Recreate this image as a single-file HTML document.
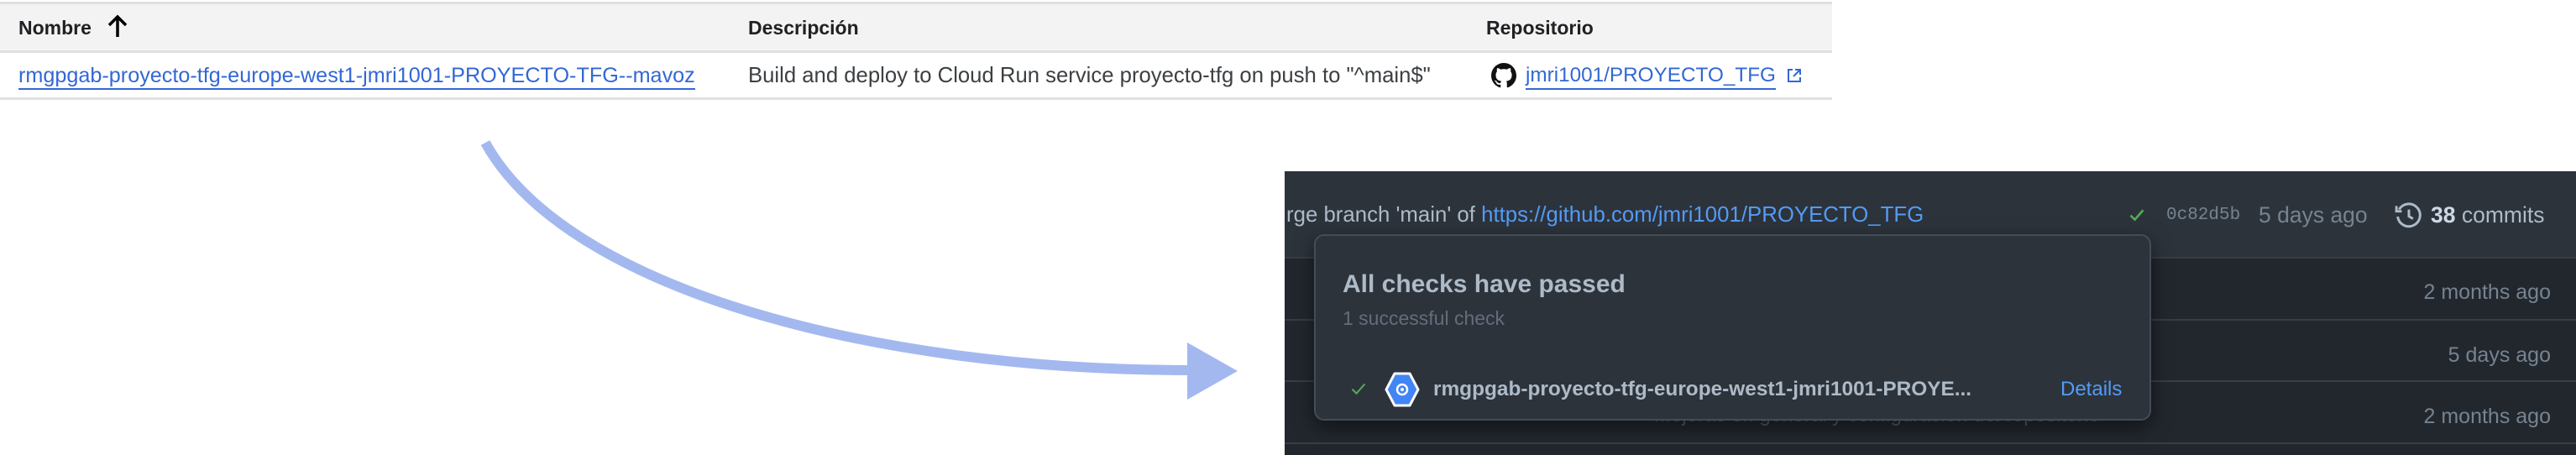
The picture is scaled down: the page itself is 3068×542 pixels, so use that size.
<!DOCTYPE html>
<html><head><meta charset="utf-8"><style>
*{margin:0;padding:0;box-sizing:border-box}
body{width:3068px;height:542px;background:#fff;position:relative;overflow:hidden;font-family:"Liberation Sans",Arial,sans-serif}
.a{position:absolute;white-space:nowrap}
.gh{font-family:"Liberation Sans",Arial,sans-serif}
</style></head><body>
<!-- table -->
<div class="a" style="left:0;top:2px;width:2182px;height:3px;background:#e0e0e0"></div>
<div class="a" style="left:0;top:5px;width:2182px;height:55px;background:#f3f3f3"></div>
<div class="a" style="left:0;top:60px;width:2182px;height:3px;background:#e0e0e0"></div>
<div class="a" style="left:0;top:116px;width:2182px;height:3px;background:#e0e0e0"></div>
<div class="a" style="left:22px;top:19px;font-size:23px;font-weight:bold;color:#202124;line-height:28px">Nombre</div>
<svg class="a" style="left:126px;top:16px" width="28" height="30" viewBox="0 0 28 30"><path d="M14 28V4M4 14L14 4L24 14" stroke="#000" stroke-width="3.5" fill="none"/></svg>
<div class="a" style="left:891px;top:19px;font-size:23px;font-weight:bold;color:#202124;line-height:28px">Descripción</div>
<div class="a" style="left:1770px;top:19px;font-size:23px;font-weight:bold;color:#202124;line-height:28px">Repositorio</div>
<div class="a" style="left:22px;top:75px;font-size:25.2px;color:#3367d6;line-height:30px;border-bottom:2px solid #3367d6">rmgpgab-proyecto-tfg-europe-west1-jmri1001-PROYECTO-TFG--mavoz</div>
<div class="a" style="left:891px;top:75px;font-size:25.7px;color:#3c4043;line-height:30px">Build and deploy to Cloud Run service proyecto-tfg on push to "^main$"</div>
<svg class="a" style="left:1776px;top:74px" width="30" height="32" viewBox="0 0 16 16"><path fill="#111" d="M8 0C3.58 0 0 3.58 0 8c0 3.54 2.29 6.53 5.47 7.59.4.07.55-.17.55-.38 0-.19-.01-.82-.01-1.49-2.010.37-2.53-.49-2.69-.94-.09-.23-.48-.94-.82-1.13-.28-.15-.68-.52-.01-.53.63-.01 1.080.58 1.23.82.72 1.21 1.87.87 2.33.66.07-.52.28-.87.51-1.07-1.78-.2-3.64-.89-3.64-3.95 0-.87.31-1.59.82-2.15-.08-.2-.36-1.020.08-2.12 0 0 .67-.21 2.2.82.64-.18 1.32-.27 2-.27.68 0 1.36.09 2 .27 1.53-1.04 2.2-.82 2.2-.82.44 1.1.16 1.92.08 2.12.51.56.82 1.27.82 2.15 0 3.07-1.87 3.75-3.65 3.95.29.25.54.73.54 1.48 0 1.07-.01 1.93-.01 2.2 0 .21.15.46.55.38A8.013 8.013 0 0016 8c0-4.42-3.58-8-8-8z"/></svg>
<div class="a" style="left:1817px;top:75px;font-size:24.3px;color:#3367d6;line-height:30px;border-bottom:2px solid #3367d6">jmri1001/PROYECTO_TFG</div>
<svg class="a" style="left:2127px;top:80px" width="20" height="20" viewBox="0 0 20 20"><path d="M8 3H3v14h14v-5M11 3h6v6M17 3L9 11" stroke="#3367d6" stroke-width="2" fill="none"/></svg>

<!-- arrow -->
<svg class="a" style="left:0;top:0" width="1530" height="542" viewBox="0 0 1530 542"><path d="M578 170 C 675 345 1040 441 1416 441" stroke="#a4b8f0" stroke-width="12" fill="none"/><path d="M1414 408 L1474 442 L1414 476 Z" fill="#a4b8f0"/></svg>

<!-- github dark panel -->
<div class="a" style="left:1530px;top:204px;width:1538px;height:338px;background:#22272e;overflow:hidden">
  <div class="a" style="left:0;top:0;width:1538px;height:102px;background:#2d333b"></div>
  <div class="a" style="left:0;top:102px;width:1538px;height:2px;background:#373e47"></div>
  <div class="a" style="left:0;top:176px;width:1538px;height:2px;background:#373e47"></div>
  <div class="a" style="left:0;top:249px;width:1538px;height:2px;background:#373e47"></div>
  <div class="a" style="left:0;top:323px;width:1538px;height:2px;background:#373e47"></div>
  <div class="a gh" style="left:2px;top:36px;font-size:25.8px;line-height:32px;color:#adbac7">rge branch 'main' of <span style="color:#539bf5">https://github.com/jmri1001/PROYECTO_TFG</span></div>
  <svg class="a" style="left:1004px;top:42px" width="22" height="20" viewBox="0 0 16 16"><path d="M2 8.5L6 12.5L14 3.5" stroke="#57ab5a" stroke-width="2" fill="none"/></svg>
  <div class="a" style="left:1050px;top:40px;font-family:'Liberation Mono',monospace;font-size:21px;line-height:26px;color:#768390">0c82d5b</div>
  <div class="a gh" style="left:1160px;top:36px;font-size:26.5px;line-height:32px;color:#768390">5 days ago</div>
  <svg class="a" style="left:1322px;top:36px" width="34" height="34" viewBox="0 0 16 16"><path d="M2.5 4.5A6.3 6.3 0 1 1 1.7 8.5" stroke="#adbac7" stroke-width="1.4" fill="none"/><path d="M1 2.5V5.5H4" stroke="#adbac7" stroke-width="1.4" fill="none"/><path d="M8 4.5V8.3L10.3 9.7" stroke="#adbac7" stroke-width="1.4" fill="none"/></svg>
  <div class="a gh" style="left:1365px;top:36px;font-size:26.5px;line-height:32px;color:#adbac7"><b style="color:#cdd9e5">38</b> commits</div>
  <div class="a gh" style="right:30px;top:128px;font-size:25px;line-height:32px;color:#768390">2 months ago</div>
  <div class="a gh" style="right:30px;top:203px;font-size:25px;line-height:32px;color:#768390">5 days ago</div>
  <div class="a gh" style="right:30px;top:276px;font-size:25px;line-height:32px;color:#768390">2 months ago</div>
  <div class="a gh" style="left:440px;top:276px;font-size:24px;line-height:30px;color:#545d68">Mejoras en general y configuración del repositorio</div>
</div>
<!-- popup -->
<div class="a" style="left:1565px;top:279px;width:997px;height:222px;background:#2d333b;border:2px solid #444c56;border-radius:12px;box-shadow:0 8px 24px rgba(0,0,0,.5)">
  <div class="a gh" style="left:32px;top:40px;font-size:30px;font-weight:bold;line-height:36px;color:#adbac7">All checks have passed</div>
  <div class="a gh" style="left:32px;top:83px;font-size:23px;line-height:30px;color:#636e7b">1 successful check</div>
  <svg class="a" style="left:40px;top:172px" width="22" height="20" viewBox="0 0 16 16"><path d="M2 8.5L6 12.5L14 3.5" stroke="#57ab5a" stroke-width="1.6" fill="none"/></svg>
  <svg class="a" style="left:82px;top:162px" width="42" height="42" viewBox="0 0 42 42"><path d="M12 2H30L40 21L30 40H12L2 21Z" fill="#4285f4" stroke="#fff" stroke-width="3" stroke-linejoin="round"/><circle cx="21" cy="21" r="6" fill="none" stroke="#fff" stroke-width="2.5"/><circle cx="21" cy="21" r="2" fill="#fff"/></svg>
  <div class="a gh" style="left:140px;top:168px;font-size:24.4px;font-weight:bold;line-height:30px;color:#adbac7">rmgpgab-proyecto-tfg-europe-west1-jmri1001-PROYE...</div>
  <div class="a gh" style="left:887px;top:168px;font-size:24px;line-height:30px;color:#539bf5">Details</div>
</div>
</body></html>
